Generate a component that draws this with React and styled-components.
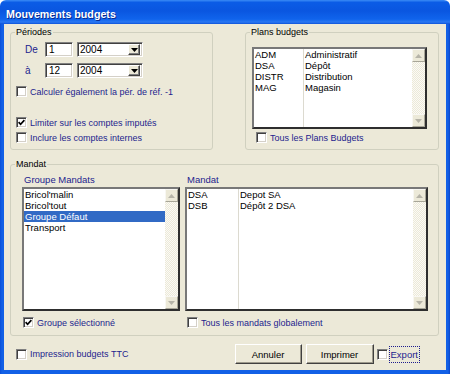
import React from "react";
import styled, { createGlobalStyle } from "styled-components";

// ------------------------------

const GlobalStyle = createGlobalStyle`
	html, body {
		margin: 0;
		padding: 0;
		background: #ffffff;
	}

	body {
		font-family: "Liberation Sans", Arial, sans-serif;
		font-size: 9px;
		color: #000000;
	}
`;

const NAVY = "#1d1d8e";

const Window = styled.div`
	width: 450px;
	height: 374px;
	display: flex;
	flex-direction: column;
	box-sizing: border-box;
`;

const TitleBar = styled.div`
	height: 24px;
	flex: none;
	display: flex;
	align-items: center;
	padding: 3px 0 0 6px;
	box-sizing: border-box;
	border-radius: 6px 6px 0 0;
	background: linear-gradient(to bottom, #3b8cf6 0%, #0b5ce6 10%, #0a56e0 45%, #1064ec 80%, #2a78f2 92%, #0d52d8 100%);
	color: #ffffff;
	font-weight: bold;
	font-size: 10.7px;
	text-shadow: 1px 1px 0 #0a2a8e;
`;

const Frame = styled.div`
	flex: 1;
	display: flex;
	padding: 0 4px 4px 4px;
	background: linear-gradient(to right, #0a4fd8, #1260e6 2px, #1260e6 calc(100% - 2px), #0a44c8);
`;

const Body = styled.div`
	flex: 1;
	display: flex;
	flex-direction: column;
	padding: 3px 7px 0 6px;
	background: #ece9d8;
`;

const TopRow = styled.div`
	display: flex;
	justify-content: space-between;
	height: 123px;
`;

const Group = styled.fieldset`
	margin: 0;
	padding: 0;
	min-width: 0;
	box-sizing: border-box;
	width: ${ p => p.$w }px;
	height: ${ p => p.$h }px;
	border: 1px solid #d0d0bf;
	border-radius: 3px;
`;

const Legend = styled.legend`
	margin-left: 4px;
	padding: 0 1px;
	line-height: 11px;
	font-size: 9px;
	color: #000000;
`;

const GroupInner = styled.div`
	display: flex;
	flex-direction: ${ p => p.$row ? "row" : "column" };
	padding-left: ${ p => p.$left }px;
	gap: ${ p => p.$gap || 0 }px;
`;

const PeriodRow = styled.div`
	display: flex;
	align-items: center;
	height: 15px;
	margin: ${ p => p.$top }px 0 0 9px;
`;

const FieldLabel = styled.span`
	width: 20px;
	color: ${ NAVY };
	font-size: 10px;
`;

const Sunken = styled.div`
	box-sizing: border-box;
	height: 15px;
	background: #ffffff;
	border: 1px solid;
	border-color: #808080 #ffffff #ffffff #808080;
	box-shadow: inset 1px 1px 0 #404040, inset -1px -1px 0 #d4d0c8;
`;

const TextInput = styled(Sunken)`
	width: 28px;
	padding: 1px 0 0 3px;
	line-height: 11px;
	font-size: 10px;
`;

const Combo = styled(Sunken)`
	width: 66px;
	margin-left: 4px;
	display: flex;
	align-items: center;
	padding: 2px;
`;

const ComboValue = styled.span`
	flex: 1;
	font-size: 10px;
	line-height: 11px;
`;

const ComboButton = styled.span`
	width: 12px;
	height: 11px;
	box-sizing: border-box;
	display: flex;
	align-items: center;
	justify-content: center;
	background: #ece9d8;
	border: 1px solid;
	border-color: #ffffff #404040 #404040 #ffffff;
	box-shadow: inset -1px -1px 0 #808080;
`;

const CheckRow = styled.div`
	display: flex;
	align-items: center;
	height: 13px;
	gap: 3px;
	margin-top: ${ p => p.$top || 0 }px;
	padding-left: ${ p => p.$left || 0 }px;
	color: ${ NAVY };
	white-space: nowrap;
`;

const CheckBox = styled.span`
	width: 11px;
	height: 11px;
	flex: none;
	box-sizing: border-box;
	display: flex;
	align-items: center;
	justify-content: center;
	background: #ffffff;
	border: 1px solid;
	border-color: #808080 #ffffff #ffffff #808080;
	box-shadow: inset 1px 1px 0 #404040, inset -1px -1px 0 #d4d0c8;
`;

const ListBox = styled.div`
	display: flex;
	box-sizing: border-box;
	width: ${ p => p.$w }px;
	height: ${ p => p.$h }px;
	margin-top: ${ p => p.$top }px;
	background: #ffffff;
	border: 2px solid;
	border-color: #787878 #2e2e2e #2e2e2e #787878;
	overflow: hidden;
`;

const ListColumn = styled.div`
	display: flex;
	flex-direction: column;
	width: ${ p => p.$w ? `${ p.$w }px` : "auto" };
	flex: ${ p => p.$w ? "none" : 1 };
	box-sizing: border-box;
	border-left: ${ p => p.$sep ? "1px solid #dcdad0" : "none" };
	padding-left: ${ p => p.$sep ? 1 : 0 }px;
`;

const ListItem = styled.div`
	height: 11px;
	line-height: 11px;
	padding-left: ${ p => p.$pad }px;
	font-size: 9.5px;
	white-space: nowrap;
	background: ${ p => p.$selected ? "#316ac5" : "transparent" };
	color: ${ p => p.$selected ? "#ffffff" : "#000000" };
`;

const ScrollBar = styled.div`
	width: 13px;
	flex: none;
	display: flex;
	flex-direction: column;
	justify-content: space-between;
	background-color: #f7f6f0;
	background-image: repeating-conic-gradient(#ece9d8 0 25%, #fbfaf6 0 50%);
	background-size: 2px 2px;
`;

const ScrollButton = styled.span`
	height: 13px;
	box-sizing: border-box;
	display: flex;
	align-items: center;
	justify-content: center;
	background: #ece9d8;
	border: 1px solid;
	border-color: #f8f7f2 #a8a698 #a8a698 #f8f7f2;
`;

const MandatGroup = styled(Group)`
	margin-top: 9px;
`;

const MandatCol = styled.div`
	display: flex;
	flex-direction: column;
	width: ${ p => p.$w }px;
`;

const ColumnTitle = styled.div`
	margin: 4px 0 0 2px;
	height: 11px;
	line-height: 11px;
	font-size: 9.5px;
	color: ${ NAVY };
`;

const Footer = styled.div`
	display: flex;
	align-items: center;
	height: 20px;
	margin-top: 8px;
	padding: 0 19px 0 6px;
`;

const Spacer = styled.div`
	flex: 1;
`;

const Button = styled.div`
	width: ${ p => p.$w }px;
	height: 20px;
	margin-left: ${ p => p.$gap }px;
	box-sizing: border-box;
	display: flex;
	align-items: center;
	justify-content: center;
	background: #ece9d8;
	border: 1px solid;
	border-color: #ffffff #404040 #404040 #ffffff;
	box-shadow: inset -1px -1px 0 #9d9a8c;
	font-size: 9.5px;
`;

const ExportCheck = styled(CheckRow)`
	margin-left: 3px;
	gap: 1px;
`;

const FocusLabel = styled.span`
	height: 15px;
	line-height: 15px;
	padding: 0 1px;
	border: 1px dotted #1d1d8e;
	font-size: 9.5px;
`;

// ------------------------------

const ComboArrow = () => (
	<svg width = "7" height = "4" viewBox = "0 0 7 4">
		<path d = "M0 0 H7 L3.5 4 Z" fill = "#000000" />
	</svg>
);

const Tick = () => (
	<svg width = "7" height = "7" viewBox = "0 0 7 7">
		<path d = "M0.6 3.2 L2.6 5.3 L6.4 1.2" stroke = "#000000" strokeWidth = "1.7" fill = "none" />
	</svg>
);

const ScrollArrow = ({ down, }) => (
	<svg width = "7" height = "4" viewBox = "0 0 7 4">
		<path d = { down ? "M0 0 H7 L3.5 4 Z" : "M0 4 H7 L3.5 0 Z" } fill = "#b6b4a8" />
	</svg>
);

const Check = ({ checked, label, top, left, }) => (
	<CheckRow $top = { top } $left = { left }>
		<CheckBox>{ checked && <Tick /> }</CheckBox>
		<span>{ label }</span>
	</CheckRow>
);

const Scroll = () => (
	<ScrollBar>
		<ScrollButton><ScrollArrow /></ScrollButton>
		<ScrollButton><ScrollArrow down /></ScrollButton>
	</ScrollBar>
);

const Period = ({ label, num, top, }) => (
	<PeriodRow $top = { top }>
		<FieldLabel>{ label }</FieldLabel>
		<TextInput>{ num }</TextInput>
		<Combo>
			<ComboValue>2004</ComboValue>
			<ComboButton><ComboArrow /></ComboButton>
		</Combo>
	</PeriodRow>
);

const TwoColumnList = ({ rows, first, w, h, top, }) => (
	<ListBox $w = { w } $h = { h } $top = { top }>
		<ListColumn $w = { first }>
			{ rows.map(([ code, ]) => <ListItem key = { code } $pad = { 1 }>{ code }</ListItem>) }
		</ListColumn>
		<ListColumn $sep>
			{ rows.map(([ code, name, ]) => <ListItem key = { code } $pad = { 0 }>{ name }</ListItem>) }
		</ListColumn>
		<Scroll />
	</ListBox>
);

const plans = [
	[ "ADM", "Administratif", ],
	[ "DSA", "Dépôt", ],
	[ "DISTR", "Distribution", ],
	[ "MAG", "Magasin", ],
];

const groupes = [ "Bricol'malin", "Bricol'tout", "Groupe Défaut", "Transport", ];

const mandats = [
	[ "DSA", "Depot SA", ],
	[ "DSB", "Dépôt 2 DSA", ],
];

// ------------------------------

export default () => (
	<Window>
		<GlobalStyle />
		<TitleBar>Mouvements budgets</TitleBar>

		<Frame>
			<Body>
				<TopRow>
					<Group $w = { 203 } $h = { 123 }>
						<Legend>Périodes</Legend>
						<GroupInner $left = { 5 }>
							<Period label = "De" num = "1" top = { 4 } />
							<Period label = "à" num = "12" top = { 6 } />
							<Check label = "Calculer également la pér. de réf. -1" top = { 7 } />
							<Check checked label = "Limiter sur les comptes imputés" top = { 18 } />
							<Check label = "Inclure les comptes internes" top = { 2 } />
						</GroupInner>
					</Group>

					<Group $w = { 194 } $h = { 123 }>
						<Legend>Plans budgets</Legend>
						<GroupInner $left = { 6 }>
							<TwoColumnList rows = { plans } first = { 49 } w = { 175 } h = { 82 } top = { 9 } />
							<Check label = "Tous les Plans Budgets" top = { 2 } left = { 4 } />
						</GroupInner>
					</Group>
				</TopRow>

				<MandatGroup $w = { 429 } $h = { 177 }>
					<Legend>Mandat</Legend>
					<GroupInner $row $left = { 11 } $gap = { 5 }>
						<MandatCol $w = { 158 }>
							<ColumnTitle>Groupe Mandats</ColumnTitle>
							<ListBox $w = { 158 } $h = { 124 } $top = { 2 }>
								<ListColumn>
									{
										groupes.map((g, i) => (
											<ListItem key = { g } $pad = { 1 } $selected = { i === 2 }>
												{ g }
											</ListItem>
										))
									}
								</ListColumn>
								<Scroll />
							</ListBox>
							<Check checked label = "Groupe sélectionné" top = { 5 } left = { 1 } />
						</MandatCol>

						<MandatCol $w = { 244 }>
							<ColumnTitle>Mandat</ColumnTitle>
							<TwoColumnList rows = { mandats } first = { 51 } w = { 243 } h = { 124 } top = { 2 } />
							<Check label = "Tous les mandats globalement" top = { 5 } left = { 2 } />
						</MandatCol>
					</GroupInner>
				</MandatGroup>

				<Footer>
					<Check label = "Impression budgets TTC" />
					<Spacer />
					<Button $w = { 67 } $gap = { 0 }>Annuler</Button>
					<Button $w = { 68 } $gap = { 4 }>Imprimer</Button>
					<ExportCheck>
						<CheckBox />
						<FocusLabel>Export</FocusLabel>
					</ExportCheck>
				</Footer>
			</Body>
		</Frame>
	</Window>
);
